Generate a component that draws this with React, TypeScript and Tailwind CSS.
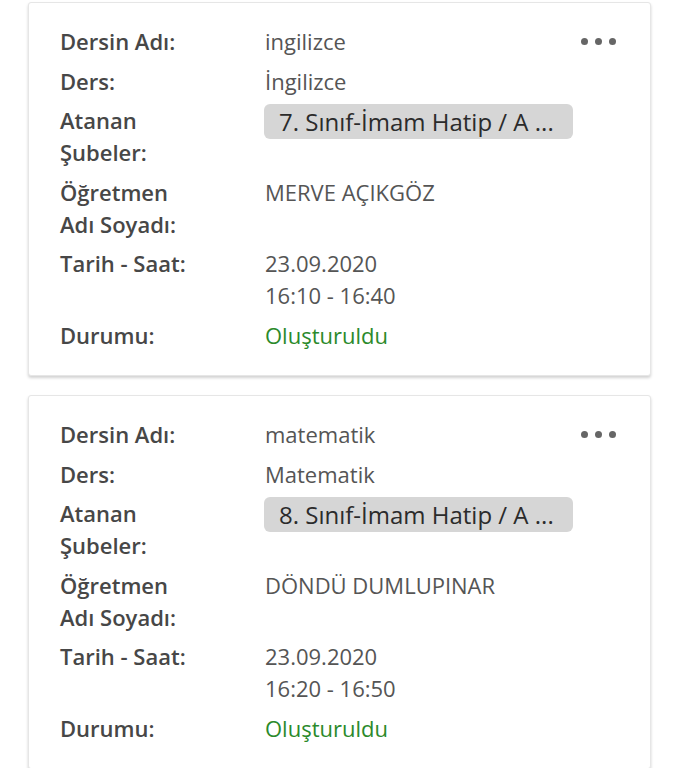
import React from "react";

type Row = { label: React.ReactNode; value: React.ReactNode };

const font = { fontFamily: '"Open Sans", "Noto Sans", sans-serif' };

function Dots() {
  return (
    <div className="self-start flex items-center gap-[7px] pt-[13px]">
      <span className="block w-[7px] h-[7px] rounded-full bg-[#666]" />
      <span className="block w-[7px] h-[7px] rounded-full bg-[#666]" />
      <span className="block w-[7px] h-[7px] rounded-full bg-[#666]" />
    </div>
  );
}

function Card({ rows }: { rows: Row[] }) {
  return (
    <div className="bg-white rounded-[3px] border border-[#e6e6e6] shadow-[0_2px_3px_rgba(0,0,0,0.18)] flex pl-[31px] pr-[34px] pt-[22px] pb-[24px]">
      <div className="flex-1 flex flex-col gap-[7.6px]">
        {rows.map((r, i) => (
          <div key={i} className="grid grid-cols-[205px_1fr] text-[22px] leading-[32px]">
            <div className="font-semibold text-[#474747] w-[145px]">{r.label}</div>
            <div className="text-[#555]">{r.value}</div>
          </div>
        ))}
      </div>
      <Dots />
    </div>
  );
}

function Pill({ children }: { children: React.ReactNode }) {
  return (
    <div className="w-[309px] h-[35px] -ml-px rounded-[6px] bg-[#d6d6d6] text-[#2b2b2b] text-[24px] px-[15px] leading-[35px] whitespace-nowrap overflow-hidden">
      {children}
    </div>
  );
}

function rowsFor(name: string, ders: string, sube: string, teacher: string, date: string, time: string): Row[] {
  return [
    { label: "Dersin Adı:", value: name },
    { label: "Ders:", value: ders },
    { label: "Atanan Şubeler:", value: <Pill>{sube}</Pill> },
    { label: "Öğretmen Adı Soyadı:", value: teacher },
    {
      label: "Tarih - Saat:",
      value: (
        <>
          <div>{date}</div>
          <div>{time}</div>
        </>
      ),
    },
    { label: "Durumu:", value: <span className="text-[#2b8a2b]">Oluşturuldu</span> },
  ];
}

export default function App() {
  return (
    <div style={font} className="bg-white min-h-[768px] px-[28px] pt-[2px] flex flex-col gap-[19px]">
      <Card rows={rowsFor("ingilizce", "İngilizce", "7. Sınıf-İmam Hatip / A ...", "MERVE AÇIKGÖZ", "23.09.2020", "16:10 - 16:40")} />
      <Card rows={rowsFor("matematik", "Matematik", "8. Sınıf-İmam Hatip / A ...", "DÖNDÜ DUMLUPINAR", "23.09.2020", "16:20 - 16:50")} />
    </div>
  );
}
